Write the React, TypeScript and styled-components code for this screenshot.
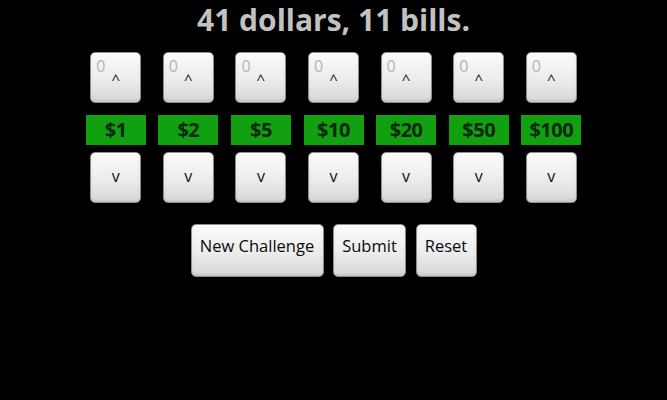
import React from 'react'
import styled, { createGlobalStyle } from 'styled-components'

const GlobalStyle = createGlobalStyle`
  html, body {
    margin: 0;
    padding: 0;
    background: #000;
  }
  body {
    width: 667px;
    height: 400px;
    overflow: hidden;
    font-family: 'Open Sans', 'Noto Sans', sans-serif;
  }
`

const Screen = styled.div`
  display: flex;
  flex-direction: column;
  align-items: center;
  padding-top: 2px;
`

const Title = styled.div`
  font-size: 30px;
  line-height: 36px;
  font-weight: 700;
  color: #c2c2c2;
`

const Bills = styled.div`
  display: flex;
  justify-content: center;
  gap: 12.6px;
  margin-top: 14px;
`

const Column = styled.div`
  width: 60px;
  display: flex;
  flex-direction: column;
  align-items: center;
`

const KeyButton = styled.button<{ $w?: number; $h?: number }>`
  position: relative;
  box-sizing: border-box;
  width: ${({ $w }) => $w ?? 51}px;
  height: ${({ $h }) => $h ?? 51}px;
  margin: 0;
  padding: 0 0 4px;
  border: 1px solid #8e8e8e;
  border-radius: 5px;
  background: linear-gradient(180deg, #fafafa 0%, #ececec 55%, #d6d6d6 100%);
  box-shadow: inset 0 1px 0 #fff, inset 0 -2px 2px rgba(0, 0, 0, 0.08);
  font-family: 'Open Sans', 'Noto Sans', sans-serif;
  font-size: 16px;
  color: #111;
  display: flex;
  align-items: center;
  justify-content: center;
`

const Count = styled.span`
  position: absolute;
  top: 3px;
  left: 5px;
  font-size: 16px;
  line-height: 20px;
  color: #b4b4b4;
`

const Caret = styled.span`
  margin-top: 7px;
  font-size: 15px;
`

const Label = styled.div`
  width: 60px;
  height: 30px;
  margin: 12px 0 7px;
  background: #10a010;
  color: #0c280c;
  font-size: 20px;
  font-weight: 700;
  line-height: 30px;
  text-align: center;
  letter-spacing: -0.5px;
`

const Actions = styled.div`
  display: flex;
  justify-content: center;
  gap: 9.5px;
  margin-top: 21px;
`

const ActionButton = styled(KeyButton)`
  font-size: 16.5px;
  padding-bottom: 10px;
  color: #0a0a0a;
`

const denominations = [1, 2, 5, 10, 20, 50, 100]

export default function App() {
  return (
    <>
      <GlobalStyle />
      <Screen>
        <Title>41 dollars, 11 bills.</Title>
        <Bills>
          {denominations.map((d) => (
            <Column key={d}>
              <KeyButton>
                <Count>0</Count>
                <Caret>^</Caret>
              </KeyButton>
              <Label>${d}</Label>
              <KeyButton>v</KeyButton>
            </Column>
          ))}
        </Bills>
        <Actions>
          <ActionButton $w={133} $h={53}>New Challenge</ActionButton>
          <ActionButton $w={73} $h={53}>Submit</ActionButton>
          <ActionButton $w={61} $h={53}>Reset</ActionButton>
        </Actions>
      </Screen>
    </>
  )
}
